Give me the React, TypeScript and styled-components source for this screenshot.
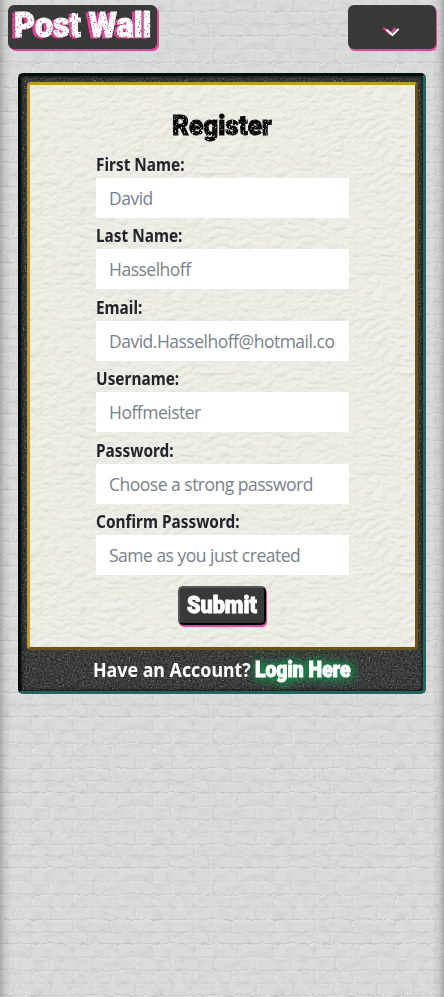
import React from 'react';
import styled, { createGlobalStyle } from 'styled-components';

const svg = (markup: string) => `url("data:image/svg+xml,${encodeURIComponent(markup)}")`;

const joints: number[][] = [
  [14, 51, 92],
  [32, 73, 110],
  [7, 49, 87],
  [32, 73, 116],
  [14, 50, 93],
  [32, 73, 110],
];
const rowY = [0, 12.5, 25, 36.5, 50, 63];

const bricks = rowY
  .map((y, r) => {
    const h = (rowY[r + 1] ?? 75.7) - y;
    return (
      `<path d="M-5 ${y + 1}h131" stroke="#c6c6c6"/><path d="M-5 ${y + 2.2}h131" stroke="#e1e1e1"/>` +
      joints[r]
        .map(
          (x) =>
            `<path d="M${x} ${y + 2}v${h - 2}" stroke="#c8c8c8"/><path d="M${x + 1.2} ${y + 2}v${h - 2}" stroke="#e2e2e2"/>`
        )
        .join('')
    );
  })
  .join('');

const wallTile = svg(
  `<svg xmlns="http://www.w3.org/2000/svg" width="121" height="75.7"><filter id="w" x="0" y="0" width="100%" height="100%" color-interpolation-filters="sRGB"><feTurbulence type="fractalNoise" baseFrequency=".13" numOctaves="3" seed="4"/><feDisplacementMap in="SourceGraphic" scale="5" xChannelSelector="R" yChannelSelector="G"/></filter><filter id="n" x="0" y="0" width="100%" height="100%" color-interpolation-filters="sRGB"><feTurbulence type="fractalNoise" baseFrequency=".09 .16" numOctaves="4" seed="9" stitchTiles="stitch"/><feColorMatrix values="1.6 0 0 0 .05 1.6 0 0 0 .05 1.6 0 0 0 .05 0 0 0 0 1"/></filter><rect width="121" height="76" fill="#d8d8d8"/><g fill="none" stroke-width="1.1" filter="url(#w)"><rect x="-9" y="-9" width="140" height="95" fill="#d9d9d9"/>${bricks}</g><rect width="121" height="76" filter="url(#n)" opacity=".06"/></svg>`
);

const leatherTile = svg(
  `<svg xmlns="http://www.w3.org/2000/svg" width="200" height="200"><filter id="l" x="0" y="0" width="100%" height="100%" color-interpolation-filters="sRGB"><feTurbulence type="turbulence" baseFrequency=".07 .11" numOctaves="3" seed="7" stitchTiles="stitch"/><feColorMatrix values="0 0 0 0 0 0 0 0 0 0 0 0 0 0 0 1 0 0 0 0"/><feDiffuseLighting surfaceScale="1.4" diffuseConstant="1.12" lighting-color="#efeee8"><feDistantLight azimuth="245" elevation="62"/></feDiffuseLighting></filter><rect width="200" height="200" fill="#ecebe4"/><rect width="200" height="200" filter="url(#l)" opacity=".2"/></svg>`
);

const asphaltTile = svg(
  `<svg xmlns="http://www.w3.org/2000/svg" width="240" height="180"><filter id="a" x="0" y="0" width="100%" height="100%" color-interpolation-filters="sRGB"><feTurbulence type="fractalNoise" baseFrequency=".6" numOctaves="3" seed="3" stitchTiles="stitch"/><feColorMatrix values=".36 0 0 0 .05 .36 0 0 0 .05 .36 0 0 0 .05 0 0 0 0 1"/></filter><filter id="d" x="0" y="0" width="100%" height="100%" color-interpolation-filters="sRGB"><feTurbulence type="fractalNoise" baseFrequency=".5" numOctaves="2" seed="21" stitchTiles="stitch"/><feColorMatrix values="0 0 0 0 .7 0 0 0 0 .7 0 0 0 0 .7 8 0 0 0 -5.4"/></filter><rect width="240" height="180" filter="url(#a)"/><rect width="240" height="180" filter="url(#d)" opacity=".6"/></svg>`
);

const speckle = svg(
  `<svg xmlns="http://www.w3.org/2000/svg" width="160" height="60"><filter id="s" x="0" y="0" width="100%" height="100%" color-interpolation-filters="sRGB"><feTurbulence type="fractalNoise" baseFrequency=".6" numOctaves="2" seed="12"/><feColorMatrix values="0 0 0 0 1 0 0 0 0 1 0 0 0 0 1 -5 0 0 0 4"/></filter><rect width="160" height="60" filter="url(#s)"/></svg>`
);

const GlobalStyle = createGlobalStyle`
  * { box-sizing: border-box; }
  body {
    margin: 0;
    font-family: "Noto Sans", "Open Sans", sans-serif;
    color: #212529;
    background: #d8d8d8;
  }
`;

const Page = styled.div`
  height: 997px;
  overflow: hidden;
  padding: 5px 8px 0;
  background:
    linear-gradient(90deg, rgba(0,0,0,.22), rgba(0,0,0,.07) 5px, transparent 12px, transparent calc(100% - 12px), rgba(0,0,0,.07) calc(100% - 5px), rgba(0,0,0,.22)),
    ${wallTile} 0 -2px;
`;

const NavBar = styled.nav`
  display: flex;
  justify-content: space-between;
  height: 44px;
`;

const Brand = styled.a`
  display: flex;
  align-items: center;
  width: 149px;
  height: 44px;
  padding-left: 5px;
  border-radius: 6px;
  background: #393939;
  box-shadow: 2px 2px #e7459a;
`;

const MenuButton = styled.button`
  display: flex;
  align-items: center;
  justify-content: center;
  width: 88px;
  height: 44px;
  padding: 9px 0 0;
  border: 0;
  border-radius: 6px;
  background: #393939;
  box-shadow: 1px 2px #e7459a;
`;

const Display = styled.span<{ $size: number; $scale: number; $color: string; $worn?: boolean }>`
  display: inline-block;
  font: 900 ${(p) => p.$size}px/1.2 Roboto, sans-serif;
  color: ${(p) => p.$color};
  -webkit-text-stroke: 1px ${(p) => p.$color};
  white-space: nowrap;
  transform: scaleX(${(p) => p.$scale});
  transform-origin: 0 50%;
  ${(p) => p.$worn && `mask-image: ${speckle};`}
`;

const BrandShadow = styled.span`
  display: block;
  margin: -2px 0 0 1px;
  filter: drop-shadow(-3px 1px 0 #e7459a);
`;

const Card = styled.main`
  width: 408px;
  height: 621px;
  margin: 24px 0 0 10px;
  padding: 6px 5px 0 6px;
  border: 3px solid;
  border-color: #030d0c #22645e #22645e #030d0c;
  border-radius: 5px;
  background: ${asphaltTile};
  box-shadow: inset 0 0 4px #000;
`;

const Panel = styled.form`
  display: flex;
  flex-direction: column;
  align-items: center;
  width: 391px;
  height: 568px;
  border: 3px solid;
  border-color: #c09a2e #69541b #69541b #c09a2e;
  border-radius: 4px;
  background: ${leatherTile};
`;

const Heading = styled.h1`
  width: 101px;
  height: 36px;
  margin: 20px 0 11px;
  line-height: 36px;
`;

const Field = styled.label`
  display: block;
  width: 253px;
  height: 71.4px;
`;

const LabelText = styled.span`
  display: block;
  height: 26px;
  font-size: 17px;
  font-weight: 700;
  line-height: 25px;
  transform: scaleX(0.905);
  transform-origin: 0 50%;
`;

const Input = styled.input`
  display: block;
  width: 253px;
  height: 40px;
  padding: 0 13px;
  border: 0;
  border-radius: 0;
  background: #fff;
  font: 400 17.5px "Open Sans", sans-serif;
  letter-spacing: -0.5px;
  &::placeholder { color: #78818a; opacity: 1; }
`;

const Submit = styled.button`
  width: 88px;
  height: 39px;
  margin: 6px 0 0 -1px;
  padding: 0 0 0 7px;
  border: 2px solid;
  border-color: #555 #050505 #050505 #555;
  border-radius: 5px;
  background: #393939;
  box-shadow: 1px 2px #e7459a;
  text-align: left;
`;

const Footer = styled.p`
  display: flex;
  align-items: center;
  height: 40px;
  margin: 0 0 0 66px;
`;

const Question = styled.span`
  width: 162px;
  color: #fff;
  font-size: 19px;
  font-weight: 700;
  white-space: nowrap;
  transform: scaleX(0.937);
  transform-origin: 0 50%;
`;

const LoginLink = styled.a`
  width: 97px;
  filter: drop-shadow(0 0 4px #168b4b) drop-shadow(2px 1px 5px #168b4b);
`;

const fields = [
  ['First Name:', 'David', 'text'],
  ['Last Name:', 'Hasselhoff', 'text'],
  ['Email:', 'David.Hasselhoff@hotmail.com', 'email'],
  ['Username:', 'Hoffmeister', 'text'],
  ['Password:', 'Choose a strong password', 'password'],
  ['Confirm Password:', 'Same as you just created', 'password'],
];

export default function App() {
  return (
    <Page>
      <GlobalStyle />
      <NavBar>
        <Brand>
          <BrandShadow>
            <Display $size={35} $scale={0.925} $color="#fff" $worn>Post Wall</Display>
          </BrandShadow>
        </Brand>
        <MenuButton type="button" aria-label="Menu">
          <svg width="18" height="10" viewBox="0 0 18 10" fill="none" strokeWidth="2" strokeLinecap="round" strokeLinejoin="round">
            <path d="M1 1.5 7 7l5-5.5" stroke="#e7459a" />
            <path d="m4 3 5.5 5L15 2.5" stroke="#fff" />
          </svg>
        </MenuButton>
      </NavBar>
      <Card>
        <Panel>
          <Heading>
            <Display $size={28} $scale={0.93} $color="#050505" $worn>Register</Display>
          </Heading>
          {fields.map(([label, placeholder, type]) => (
            <Field key={label}>
              <LabelText>{label}</LabelText>
              <Input type={type} placeholder={placeholder} />
            </Field>
          ))}
          <Submit type="button">
            <Display $size={24} $scale={0.9} $color="#fff">Submit</Display>
          </Submit>
        </Panel>
        <Footer>
          <Question>Have an Account?</Question>
          <LoginLink>
            <Display $size={22} $scale={0.88} $color="#fff">Login Here</Display>
          </LoginLink>
        </Footer>
      </Card>
    </Page>
  );
}
